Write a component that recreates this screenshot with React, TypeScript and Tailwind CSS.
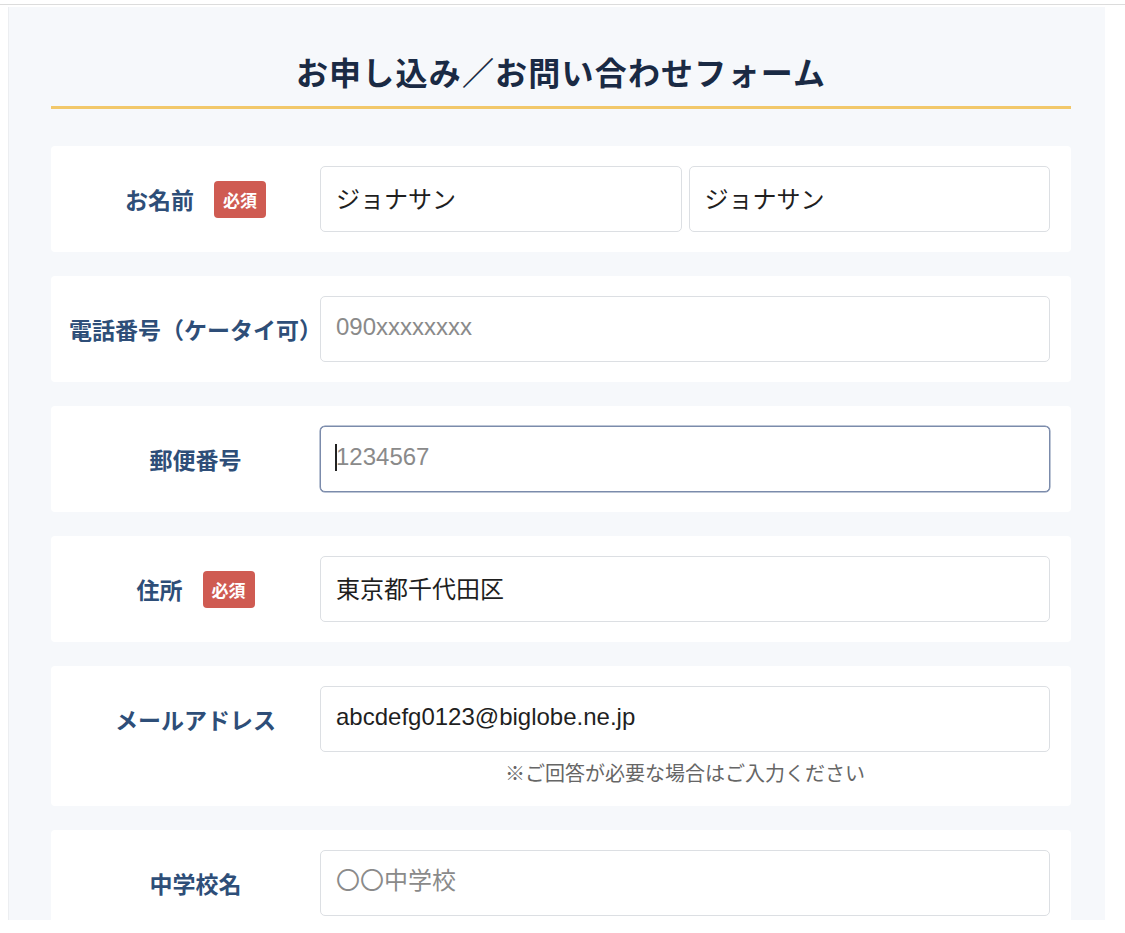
import React from 'react'

const jp = "font-['Noto_Sans_CJK_JP',sans-serif]"
const inputFont = "font-['Liberation_Sans','Noto_Sans_CJK_JP',sans-serif]"

function Badge() {
  return (
    <span className="inline-flex h-[37px] w-[52px] items-center justify-center rounded-[4px] bg-[#cf5b52] text-[17px] font-bold leading-none text-white">
      必須
    </span>
  )
}

function Field({
  value,
  placeholder,
  focused,
  className = '',
}: {
  value?: string
  placeholder?: string
  focused?: boolean
  className?: string
}) {
  return (
    <div className={`relative ${className}`}>
      <input
        readOnly
        defaultValue={value}
        placeholder={placeholder}
        className={`h-[66px] w-full rounded-[5px] border bg-white px-[15px] pb-[4px] text-[24px] text-[#1f1f1f] outline-none placeholder:text-[#8a8a8a] ${inputFont} ${
          focused ? 'border-[#7b8bab] shadow-[0_0_0_0.5px_#7b8bab]' : 'border-[#dcdfe3]'
        }`}
      />
      {focused && (
        <span className="pointer-events-none absolute left-[15px] top-[18px] h-[27px] w-[2px] bg-[#222]" />
      )}
    </div>
  )
}

function Row({
  label,
  required,
  children,
}: {
  label: string
  required?: boolean
  children: React.ReactNode
}) {
  return (
    <div className="flex items-start rounded-[4px] bg-white py-[20px] pl-[20px] pr-[21px]">
      <div className="flex h-[66px] w-[249px] shrink-0 items-center justify-center gap-[20px]">
        <span className={`whitespace-nowrap text-[23px] font-bold leading-none text-[#2e4e78] ${jp}`}>
          {label}
        </span>
        {required && <Badge />}
      </div>
      <div className="flex-1">{children}</div>
    </div>
  )
}

export default function App() {
  return (
    <div className={`h-[933px] w-[1125px] overflow-hidden bg-white ${jp}`}>
      <div className="h-[4px]" />
      <div className="h-px w-full bg-[#dcdcdc]" />
      <div className="ml-[8px] mt-[2px] h-[913px] w-[1097px] overflow-hidden border-l border-[#eceef1] bg-[#f6f8fb]">
        <div className="ml-[42px] w-[1020px] pt-[40px]">
          <div className="border-b-[3px] border-[#f2c86a] pb-[11px] text-center">
            <h1 className="text-[32px] font-bold leading-[48px] tracking-[1.2px] text-[#1a2a44]">
              お申し込み／お問い合わせフォーム
            </h1>
          </div>

          <div className="mt-[37px] flex flex-col gap-[24px]">
            <Row label="お名前" required>
              <div className="flex gap-[7px]">
                <Field value="ジョナサン" className="flex-1" />
                <Field value="ジョナサン" className="flex-1" />
              </div>
            </Row>

            <Row label="電話番号（ケータイ可）">
              <Field placeholder="090xxxxxxxx" />
            </Row>

            <Row label="郵便番号">
              <Field placeholder="1234567" focused />
            </Row>

            <Row label="住所" required>
              <Field value="東京都千代田区" />
            </Row>

            <Row label="メールアドレス">
              <Field value="abcdefg0123@biglobe.ne.jp" />
              <p className="mt-[8px] text-center text-[20px] leading-[26px] text-[#666]">
                ※ご回答が必要な場合はご入力ください
              </p>
            </Row>

            <Row label="中学校名">
              <Field placeholder="〇〇中学校" />
            </Row>
          </div>
        </div>
      </div>
    </div>
  )
}
